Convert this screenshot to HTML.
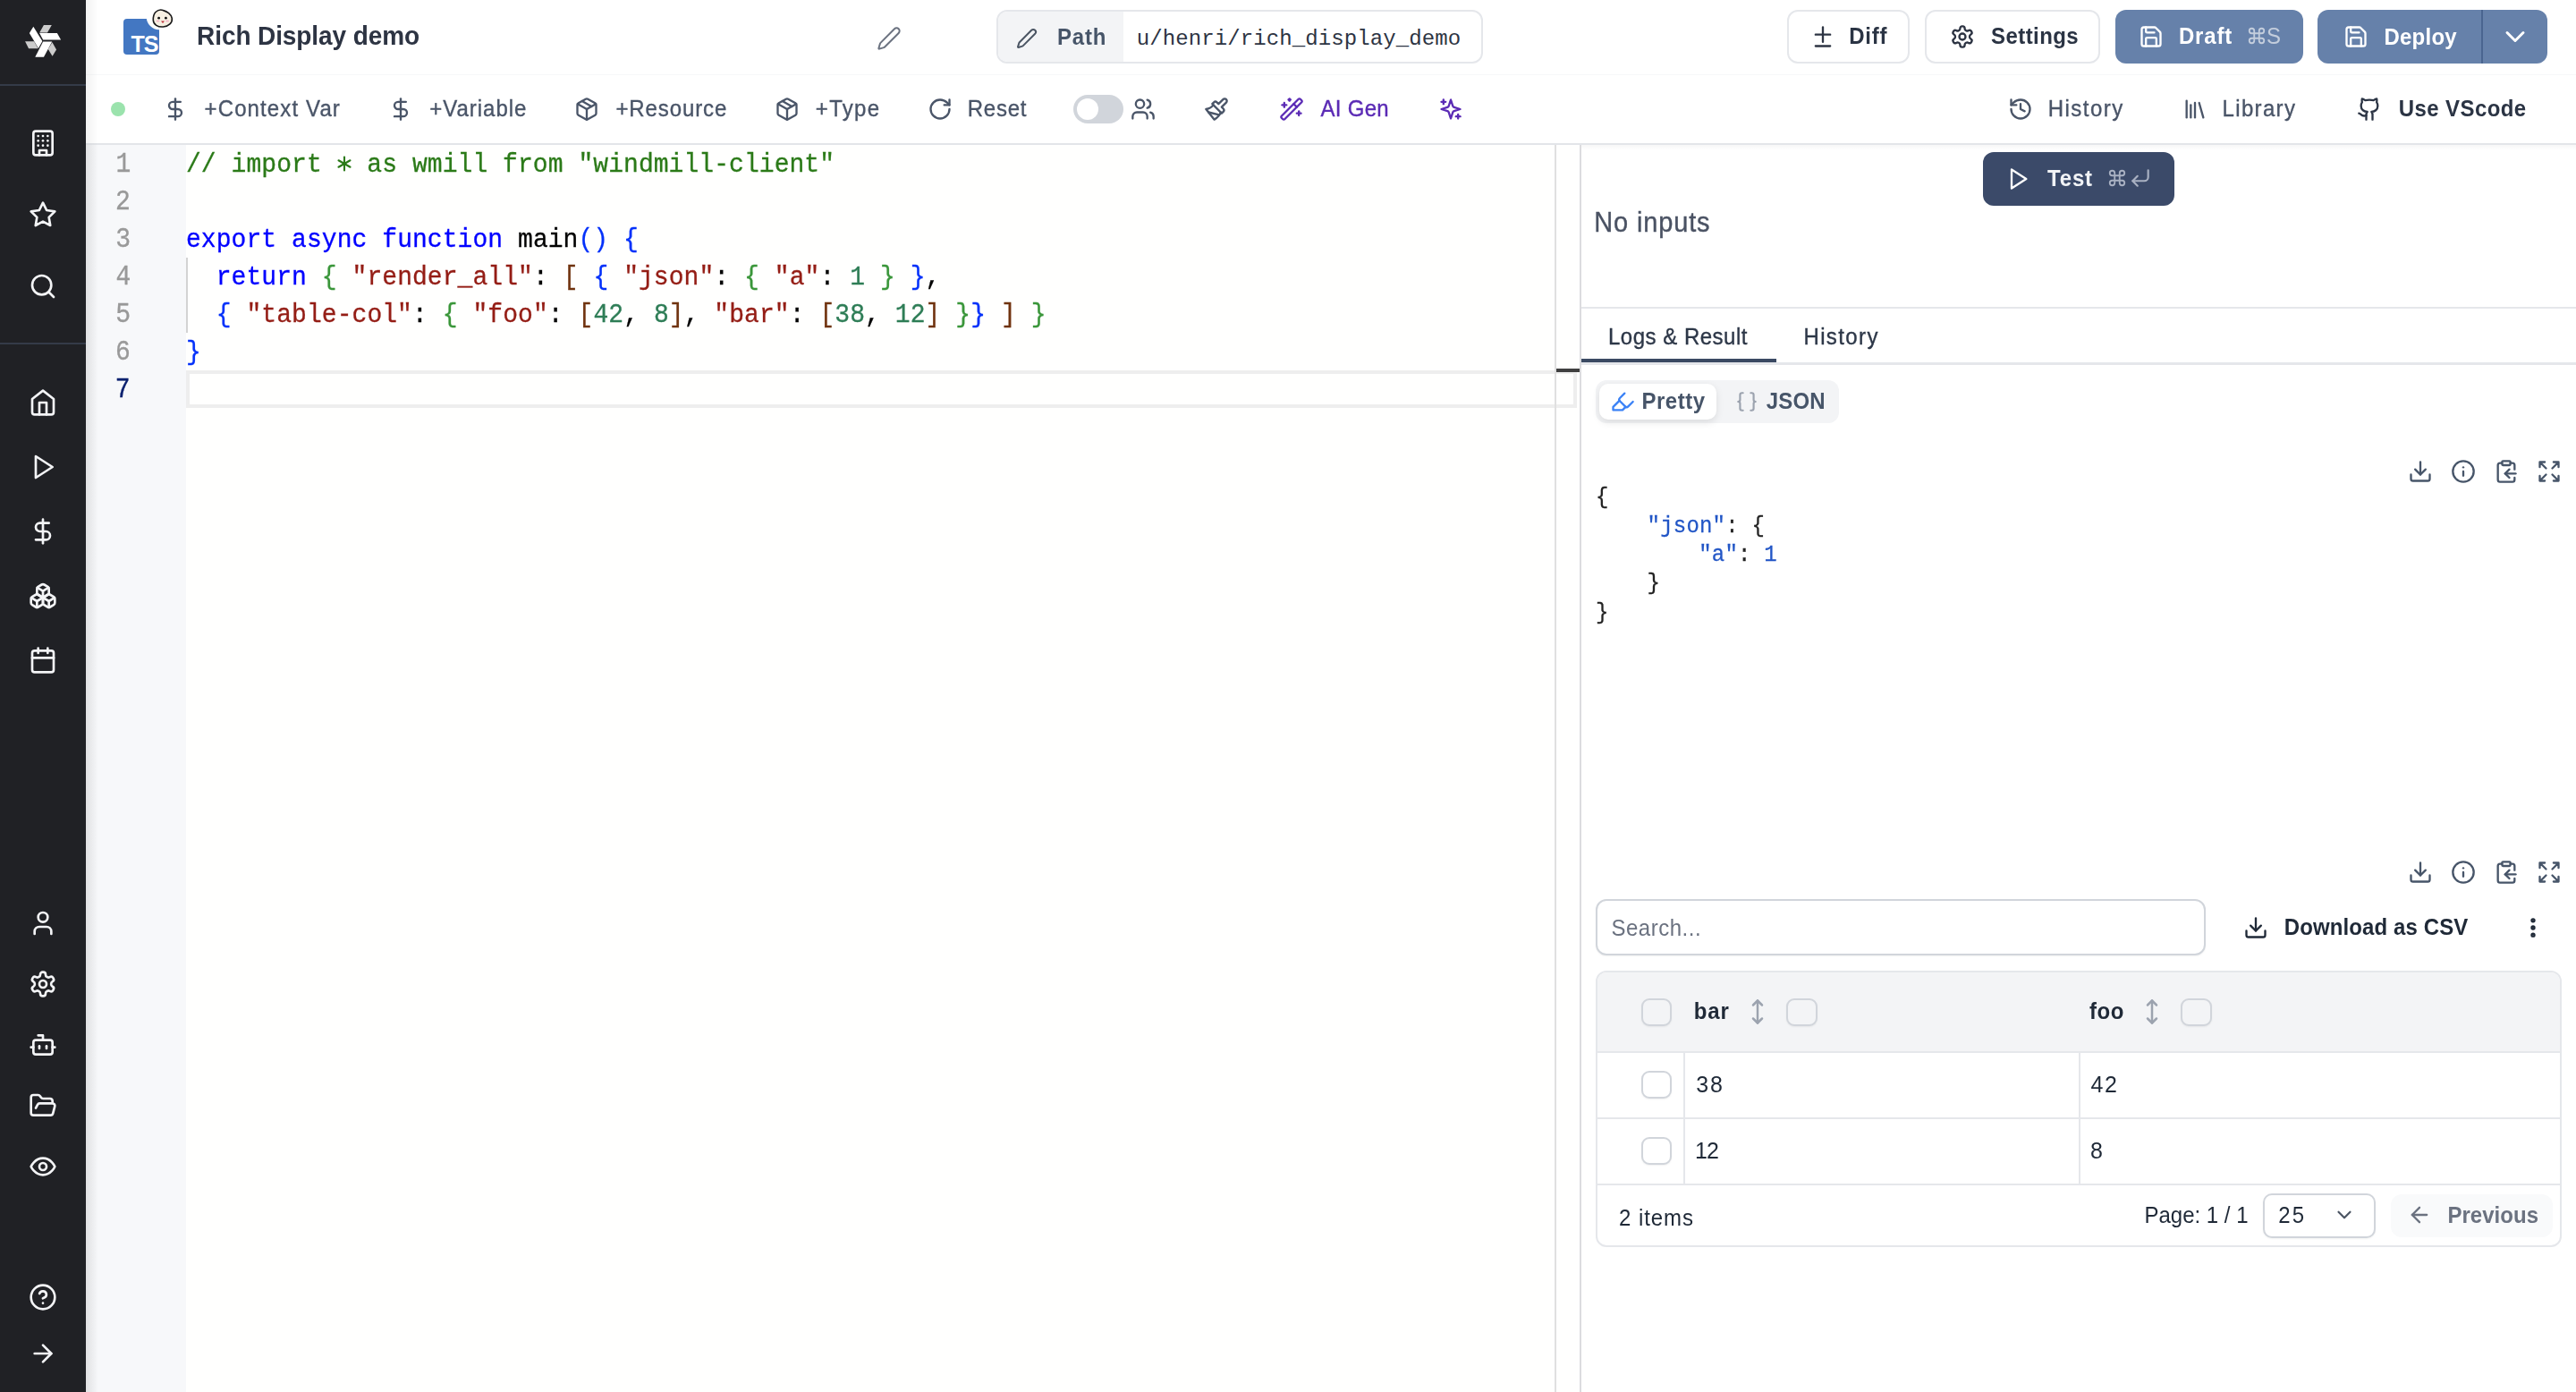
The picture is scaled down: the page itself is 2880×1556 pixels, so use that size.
<!DOCTYPE html><html><head><meta charset="utf-8"><style>*{margin:0;padding:0}
html,body{width:2880px;height:1556px;overflow:hidden;background:#fff;position:relative}
.a{position:absolute;display:block}
.t{position:absolute;white-space:pre}
.code{font:28px/42px "Liberation Mono",monospace;letter-spacing:0.06px;margin-top:2px;transform:scaleY(1.07);transform-origin:0 29.45px;-webkit-text-stroke:0.3px currentColor}
.json{font:24px/32px "Liberation Mono",monospace;letter-spacing:0.2px;margin-top:1px;transform:scaleY(1.07);transform-origin:0 24px;-webkit-text-stroke:0.25px currentColor}
</style></head><body><div class="a" style="left:96px;top:162px;width:1672px;height:1394px;background:#fffffe"></div>
<div class="a" style="left:96px;top:162px;width:112px;height:1394px;background:#f7f8fa"></div>
<div class="a" style="left:96px;top:162px;width:14px;height:1394px;background:linear-gradient(90deg,rgba(0,0,0,0.045),rgba(0,0,0,0))"></div>
<div class="t" style="left:129.57px;top:167.55px;font:normal 28px/34px 'Liberation Mono', monospace;color:#999999;letter-spacing:0.000px;-webkit-text-stroke:0.3px currentColor;transform:scaleY(1.1);transform-origin:0 24.45px;">1</div>
<div class="t" style="left:129.04px;top:209.55px;font:normal 28px/34px 'Liberation Mono', monospace;color:#999999;letter-spacing:0.000px;-webkit-text-stroke:0.3px currentColor;transform:scaleY(1.1);transform-origin:0 24.45px;">2</div>
<div class="t" style="left:129.25px;top:251.55px;font:normal 28px/34px 'Liberation Mono', monospace;color:#999999;letter-spacing:0.000px;-webkit-text-stroke:0.3px currentColor;transform:scaleY(1.1);transform-origin:0 24.45px;">3</div>
<div class="t" style="left:129.60px;top:293.55px;font:normal 28px/34px 'Liberation Mono', monospace;color:#999999;letter-spacing:0.000px;-webkit-text-stroke:0.3px currentColor;transform:scaleY(1.1);transform-origin:0 24.45px;">4</div>
<div class="t" style="left:129.25px;top:335.55px;font:normal 28px/34px 'Liberation Mono', monospace;color:#999999;letter-spacing:0.000px;-webkit-text-stroke:0.3px currentColor;transform:scaleY(1.1);transform-origin:0 24.45px;">5</div>
<div class="t" style="left:128.97px;top:377.55px;font:normal 28px/34px 'Liberation Mono', monospace;color:#999999;letter-spacing:0.000px;-webkit-text-stroke:0.3px currentColor;transform:scaleY(1.1);transform-origin:0 24.45px;">6</div>
<div class="t" style="left:128.83px;top:419.55px;font:normal 28px/34px 'Liberation Mono', monospace;color:#0b216f;letter-spacing:0.000px;-webkit-text-stroke:0.3px currentColor;transform:scaleY(1.1);transform-origin:0 24.45px;">7</div>
<div class="a" style="left:208px;top:414px;width:1555px;height:42px;box-sizing:border-box;border:4px solid #eeeeee"></div>
<div class="a" style="left:208px;top:288px;width:2px;height:84px;background:#d3d3d3"></div>
<div class="a" style="left:1738px;top:162px;width:1.5px;height:1394px;background:#e0e0e0"></div>
<div class="a" style="left:1740px;top:412px;width:26px;height:4px;background:#404040"></div>
<div class="a" style="left:1766px;top:162px;width:2px;height:1394px;background:#dcdcdf"></div>
<svg class="a" style="left:376px;top:174px" width="18" height="18" viewBox="0 0 18 18" stroke="#2b7a18" stroke-width="2.1" stroke-linecap="round"><line x1="9" y1="1.5" x2="9" y2="16.5"/><line x1="2.5" y1="5.25" x2="15.5" y2="12.75"/><line x1="2.5" y1="12.75" x2="15.5" y2="5.25"/></svg>
<div class="t code" style="left:208px;top:162px"><span style="color:#2b7a18">// import   as wmill from &quot;windmill-client&quot;</span></div>
<div class="t code" style="left:208px;top:246px"><span style="color:#0000ff">export</span><span style="color:#000000"> </span><span style="color:#0000ff">async</span><span style="color:#000000"> </span><span style="color:#0000ff">function</span><span style="color:#000000"> main</span><span style="color:#0431fa">()</span><span style="color:#000000"> </span><span style="color:#0431fa">{</span></div>
<div class="t code" style="left:208px;top:288px"><span style="color:#000000">  </span><span style="color:#0000ff">return</span><span style="color:#000000"> </span><span style="color:#3a963a">{</span><span style="color:#000000"> </span><span style="color:#941d15">&quot;render_all&quot;</span><span style="color:#000000">: </span><span style="color:#70330f">[</span><span style="color:#000000"> </span><span style="color:#0431fa">{</span><span style="color:#000000"> </span><span style="color:#941d15">&quot;json&quot;</span><span style="color:#000000">: </span><span style="color:#3a963a">{</span><span style="color:#000000"> </span><span style="color:#941d15">&quot;a&quot;</span><span style="color:#000000">: </span><span style="color:#2e7d56">1</span><span style="color:#000000"> </span><span style="color:#3a963a">}</span><span style="color:#000000"> </span><span style="color:#0431fa">}</span><span style="color:#000000">,</span></div>
<div class="t code" style="left:208px;top:330px"><span style="color:#000000">  </span><span style="color:#0431fa">{</span><span style="color:#000000"> </span><span style="color:#941d15">&quot;table-col&quot;</span><span style="color:#000000">: </span><span style="color:#3a963a">{</span><span style="color:#000000"> </span><span style="color:#941d15">&quot;foo&quot;</span><span style="color:#000000">: </span><span style="color:#70330f">[</span><span style="color:#2e7d56">42</span><span style="color:#000000">, </span><span style="color:#2e7d56">8</span><span style="color:#70330f">]</span><span style="color:#000000">, </span><span style="color:#941d15">&quot;bar&quot;</span><span style="color:#000000">: </span><span style="color:#70330f">[</span><span style="color:#2e7d56">38</span><span style="color:#000000">, </span><span style="color:#2e7d56">12</span><span style="color:#70330f">]</span><span style="color:#000000"> </span><span style="color:#3a963a">}</span><span style="color:#0431fa">}</span><span style="color:#000000"> </span><span style="color:#70330f">]</span><span style="color:#000000"> </span><span style="color:#3a963a">}</span></div>
<div class="t code" style="left:208px;top:372px"><span style="color:#0431fa">}</span></div>
<div class="a" style="left:1768px;top:162px;width:1112px;height:1394px;background:#ffffff"></div>
<div class="a" style="left:2217px;top:170px;width:214px;height:60px;background:#3b4a69;border-radius:12px"></div>
<svg class="a" style="left:2242.0px;top:186.0px;" width="28" height="28" viewBox="0 0 24 24" fill="none" stroke="#ffffff" stroke-width="2" stroke-linecap="round" stroke-linejoin="round"><polygon points="6 3 20 12 6 21 6 3"/></svg>
<div class="t" style="left:2289.06px;top:185.38px;font:bold 24px/29px 'Liberation Sans', sans-serif;color:#f1f3f6;letter-spacing:0.820px;transform:scaleY(1.05);transform-origin:0 22.82px;">Test</div>
<svg class="a" style="left:2356.4px;top:188.2px;" width="22" height="22" viewBox="0 0 24 24" fill="none" stroke="#a9b1c2" stroke-width="2" stroke-linecap="round" stroke-linejoin="round"><path d="M15 6v12a3 3 0 1 0 3-3H6a3 3 0 1 0 3 3V6a3 3 0 1 0-3 3h12a3 3 0 1 0-3-3"/></svg>
<svg class="a" style="left:2380.0px;top:186.0px;" width="26" height="26" viewBox="0 0 24 24" fill="none" stroke="#a9b1c2" stroke-width="2" stroke-linecap="round" stroke-linejoin="round"><polyline points="9 10 4 15 9 20"/><path d="M20 4v7a4 4 0 0 1-4 4H4"/></svg>
<div class="t" style="left:1782.21px;top:232.35px;font:normal 29px/35px 'Liberation Sans', sans-serif;color:#4a5263;letter-spacing:0.860px;-webkit-text-stroke:0.35px #4a5263;transform:scaleY(1.05);transform-origin:0 27.55px;">No inputs</div>
<div class="a" style="left:1768px;top:343px;width:1112px;height:2px;background:#e5e7eb"></div>
<div class="t" style="left:1797.92px;top:362.18px;font:normal 24px/29px 'Liberation Sans', sans-serif;color:#2d3748;letter-spacing:0.513px;-webkit-text-stroke:0.35px #2d3748;transform:scaleY(1.05);transform-origin:0 22.82px;">Logs &amp; Result</div>
<div class="t" style="left:2016.42px;top:362.18px;font:normal 24px/29px 'Liberation Sans', sans-serif;color:#2d3748;letter-spacing:1.390px;-webkit-text-stroke:0.35px #2d3748;transform:scaleY(1.05);transform-origin:0 22.82px;">History</div>
<div class="a" style="left:1768px;top:401px;width:218px;height:4px;background:#3b4a63"></div>
<div class="a" style="left:1768px;top:405px;width:1112px;height:3px;background:#e5e7eb"></div>
<div class="a" style="left:1784px;top:425px;width:272px;height:48px;background:#f3f4f6;border-radius:12px"></div>
<div class="a" style="left:1788px;top:429px;width:131px;height:40px;background:#ffffff;border-radius:10px;box-shadow:0 3px 8px rgba(0,0,0,0.10)"></div>
<svg class="a" style="left:1799.5px;top:435.0px;" width="28" height="28" viewBox="0 0 24 24" fill="none" stroke="#3b82f6" stroke-width="2" stroke-linecap="round" stroke-linejoin="round"><path d="m9 11-6 6v3h9l3-3"/><path d="m22 12-4.6 4.6a2 2 0 0 1-2.8 0l-5.2-5.2a2 2 0 0 1 0-2.8L14 4"/></svg>
<div class="t" style="left:1835.38px;top:434.38px;font:bold 24px/29px 'Liberation Sans', sans-serif;color:#475569;letter-spacing:0.552px;transform:scaleY(1.05);transform-origin:0 22.82px;">Pretty</div>
<svg class="a" style="left:1939.5px;top:436.0px;" width="26" height="26" viewBox="0 0 24 24" fill="none" stroke="#9ca3af" stroke-width="2" stroke-linecap="round" stroke-linejoin="round"><path d="M8 3H7a2 2 0 0 0-2 2v5a2 2 0 0 1-2 2 2 2 0 0 1 2 2v5c0 1.1.9 2 2 2h1"/><path d="M16 21h1a2 2 0 0 0 2-2v-5c0-1.1.9-2 2-2a2 2 0 0 1-2-2V5a2 2 0 0 0-2-2h-1"/></svg>
<div class="t" style="left:1974.84px;top:434.38px;font:bold 24px/29px 'Liberation Sans', sans-serif;color:#475569;letter-spacing:0.147px;transform:scaleY(1.05);transform-origin:0 22.82px;">JSON</div>
<svg class="a" style="left:2692.0px;top:513.0px;" width="28" height="28" viewBox="0 0 24 24" fill="none" stroke="#475569" stroke-width="2" stroke-linecap="round" stroke-linejoin="round"><path d="M21 15v4a2 2 0 0 1-2 2H5a2 2 0 0 1-2-2v-4"/><polyline points="7 10 12 15 17 10"/><line x1="12" x2="12" y1="15" y2="3"/></svg>
<svg class="a" style="left:2740.0px;top:513.0px;" width="28" height="28" viewBox="0 0 24 24" fill="none" stroke="#475569" stroke-width="2" stroke-linecap="round" stroke-linejoin="round"><circle cx="12" cy="12" r="10"/><path d="M12 16v-4"/><path d="M12 8h.01"/></svg>
<svg class="a" style="left:2787.5px;top:513.0px;" width="28" height="28" viewBox="0 0 24 24" fill="none" stroke="#475569" stroke-width="2" stroke-linecap="round" stroke-linejoin="round"><rect width="8" height="4" x="8" y="2" rx="1" ry="1"/><path d="M8 4H6a2 2 0 0 0-2 2v14a2 2 0 0 0 2 2h12a2 2 0 0 0 2-2v-2"/><path d="M16 4h2a2 2 0 0 1 2 2v4"/><path d="M21 14H11"/><path d="m15 10-4 4 4 4"/></svg>
<svg class="a" style="left:2836.0px;top:513.0px;" width="28" height="28" viewBox="0 0 24 24" fill="none" stroke="#475569" stroke-width="2" stroke-linecap="round" stroke-linejoin="round"><path d="m21 21-6-6m6 6v-4.8m0 4.8h-4.8"/><path d="M3 16.2V21m0 0h4.8M3 21l6-6"/><path d="M21 7.8V3m0 0h-4.8M21 3l-6 6"/><path d="M3 7.8V3m0 0h4.8M3 3l6 6"/></svg>
<svg class="a" style="left:2692.0px;top:961.0px;" width="28" height="28" viewBox="0 0 24 24" fill="none" stroke="#475569" stroke-width="2" stroke-linecap="round" stroke-linejoin="round"><path d="M21 15v4a2 2 0 0 1-2 2H5a2 2 0 0 1-2-2v-4"/><polyline points="7 10 12 15 17 10"/><line x1="12" x2="12" y1="15" y2="3"/></svg>
<svg class="a" style="left:2740.0px;top:961.0px;" width="28" height="28" viewBox="0 0 24 24" fill="none" stroke="#475569" stroke-width="2" stroke-linecap="round" stroke-linejoin="round"><circle cx="12" cy="12" r="10"/><path d="M12 16v-4"/><path d="M12 8h.01"/></svg>
<svg class="a" style="left:2787.5px;top:961.0px;" width="28" height="28" viewBox="0 0 24 24" fill="none" stroke="#475569" stroke-width="2" stroke-linecap="round" stroke-linejoin="round"><rect width="8" height="4" x="8" y="2" rx="1" ry="1"/><path d="M8 4H6a2 2 0 0 0-2 2v14a2 2 0 0 0 2 2h12a2 2 0 0 0 2-2v-2"/><path d="M16 4h2a2 2 0 0 1 2 2v4"/><path d="M21 14H11"/><path d="m15 10-4 4 4 4"/></svg>
<svg class="a" style="left:2836.0px;top:961.0px;" width="28" height="28" viewBox="0 0 24 24" fill="none" stroke="#475569" stroke-width="2" stroke-linecap="round" stroke-linejoin="round"><path d="m21 21-6-6m6 6v-4.8m0 4.8h-4.8"/><path d="M3 16.2V21m0 0h4.8M3 21l6-6"/><path d="M21 7.8V3m0 0h-4.8M21 3l-6 6"/><path d="M3 7.8V3m0 0h4.8M3 3l6 6"/></svg>
<div class="t json" style="left:1784.0px;top:539.5px"><span style="color:#222222">{</span></div>
<div class="t json" style="left:1841.6px;top:571.8px"><span style="color:#2256c6">&quot;json&quot;</span><span style="color:#222222">: {</span></div>
<div class="t json" style="left:1899.2px;top:604.1px"><span style="color:#2256c6">&quot;a&quot;</span><span style="color:#222222">: </span><span style="color:#2256c6">1</span></div>
<div class="t json" style="left:1841.6px;top:636.4px"><span style="color:#222222">}</span></div>
<div class="t json" style="left:1784.0px;top:668.7px"><span style="color:#222222">}</span></div>
<div class="a" style="left:1784px;top:1005px;width:682px;height:63px;box-sizing:border-box;border:2px solid #d1d5db;border-radius:12px;background:#fff;box-shadow:0 1px 2px rgba(0,0,0,0.05)"></div>
<div class="t" style="left:1801.42px;top:1022.58px;font:normal 24px/29px 'Liberation Sans', sans-serif;color:#6b7280;letter-spacing:0.522px;transform:scaleY(1.05);transform-origin:0 22.82px;">Search...</div>
<svg class="a" style="left:2508.0px;top:1023.0px;" width="28" height="28" viewBox="0 0 24 24" fill="none" stroke="#1f2937" stroke-width="2" stroke-linecap="round" stroke-linejoin="round"><path d="M21 15v4a2 2 0 0 1-2 2H5a2 2 0 0 1-2-2v-4"/><polyline points="7 10 12 15 17 10"/><line x1="12" x2="12" y1="15" y2="3"/></svg>
<div class="t" style="left:2553.78px;top:1022.38px;font:bold 24px/29px 'Liberation Sans', sans-serif;color:#1f2937;letter-spacing:0.110px;transform:scaleY(1.05);transform-origin:0 22.82px;">Download as CSV</div>
<svg class="a" style="left:2817.5px;top:1023.0px;" width="28" height="28" viewBox="0 0 24 24" fill="none" stroke="#1f2937" stroke-width="2.6" stroke-linecap="round" stroke-linejoin="round"><circle cx="12" cy="12" r="1"/><circle cx="12" cy="5" r="1"/><circle cx="12" cy="19" r="1"/></svg>
<div class="a" style="left:1784px;top:1085px;width:1080px;height:309px;box-sizing:border-box;border:2px solid #e5e7eb;border-radius:12px;background:#fff;overflow:hidden"></div>
<div class="a" style="left:1786px;top:1087px;width:1076px;height:88px;background:#f3f4f6;border-radius:10px 10px 0 0"></div>
<div class="a" style="left:1786px;top:1175px;width:1076px;height:2px;background:#e5e7eb"></div>
<div class="a" style="left:1786px;top:1249px;width:1076px;height:2px;background:#e5e7eb"></div>
<div class="a" style="left:1786px;top:1323px;width:1076px;height:2px;background:#e5e7eb"></div>
<div class="a" style="left:1882px;top:1177px;width:2px;height:146px;background:#e5e7eb"></div>
<div class="a" style="left:2324px;top:1177px;width:2px;height:146px;background:#e5e7eb"></div>
<div class="a" style="left:1835px;top:1116px;width:34px;height:31px;box-sizing:border-box;border:2px solid #d1d5db;border-radius:9px;background:#f3f4f6;box-shadow:0 1px 2px rgba(0,0,0,0.06)"></div>
<div class="a" style="left:1997px;top:1116px;width:35px;height:31px;box-sizing:border-box;border:2px solid #d1d5db;border-radius:9px;background:#f3f4f6;box-shadow:0 1px 2px rgba(0,0,0,0.06)"></div>
<div class="a" style="left:2438px;top:1116px;width:35px;height:31px;box-sizing:border-box;border:2px solid #d1d5db;border-radius:9px;background:#f3f4f6;box-shadow:0 1px 2px rgba(0,0,0,0.06)"></div>
<div class="a" style="left:1835px;top:1197px;width:34px;height:31px;box-sizing:border-box;border:2px solid #d1d5db;border-radius:9px;background:#fff;box-shadow:0 1px 2px rgba(0,0,0,0.06)"></div>
<div class="a" style="left:1835px;top:1271px;width:34px;height:31px;box-sizing:border-box;border:2px solid #d1d5db;border-radius:9px;background:#fff;box-shadow:0 1px 2px rgba(0,0,0,0.06)"></div>
<div class="t" style="left:1893.84px;top:1116.18px;font:bold 24px/29px 'Liberation Sans', sans-serif;color:#1f2937;letter-spacing:0.870px;transform:scaleY(1.05);transform-origin:0 22.82px;">bar</div>
<div class="t" style="left:2335.98px;top:1116.18px;font:bold 24px/29px 'Liberation Sans', sans-serif;color:#1f2937;letter-spacing:0.600px;transform:scaleY(1.05);transform-origin:0 22.82px;">foo</div>
<svg class="a" style="left:1950.0px;top:1116.0px;" width="30" height="30" viewBox="0 0 24 24" fill="none" stroke="#9ca3af" stroke-width="2" stroke-linecap="round" stroke-linejoin="round"><path d="M12 2v20"/><path d="m8 18 4 4 4-4"/><path d="m8 6 4-4 4 4"/></svg>
<svg class="a" style="left:2390.5px;top:1116.0px;" width="30" height="30" viewBox="0 0 24 24" fill="none" stroke="#9ca3af" stroke-width="2" stroke-linecap="round" stroke-linejoin="round"><path d="M12 2v20"/><path d="m8 18 4 4 4-4"/><path d="m8 6 4-4 4 4"/></svg>
<div class="t" style="left:1896.26px;top:1197.33px;font:normal 25px/30px 'Liberation Sans', sans-serif;color:#1f2937;letter-spacing:1.850px;transform:scaleY(1.05);transform-origin:0 23.67px;">38</div>
<div class="t" style="left:2337.44px;top:1197.33px;font:normal 25px/30px 'Liberation Sans', sans-serif;color:#1f2937;letter-spacing:1.662px;transform:scaleY(1.05);transform-origin:0 23.67px;">42</div>
<div class="t" style="left:1895.12px;top:1271.33px;font:normal 25px/30px 'Liberation Sans', sans-serif;color:#1f2937;letter-spacing:-1.125px;transform:scaleY(1.05);transform-origin:0 23.67px;">12</div>
<div class="t" style="left:2336.94px;top:1271.33px;font:normal 25px/30px 'Liberation Sans', sans-serif;color:#1f2937;letter-spacing:0.000px;transform:scaleY(1.05);transform-origin:0 23.67px;">8</div>
<div class="t" style="left:1810.10px;top:1346.98px;font:normal 24px/29px 'Liberation Sans', sans-serif;color:#1f2937;letter-spacing:0.917px;transform:scaleY(1.05);transform-origin:0 22.82px;">2 items</div>
<div class="t" style="left:2397.42px;top:1344.38px;font:normal 24px/29px 'Liberation Sans', sans-serif;color:#1f2937;letter-spacing:0.008px;transform:scaleY(1.05);transform-origin:0 22.82px;">Page: 1 / 1</div>
<div class="a" style="left:2530px;top:1334px;width:126px;height:50px;box-sizing:border-box;border:2px solid #d1d5db;border-radius:10px;background:#fff;box-shadow:0 1px 2px rgba(0,0,0,0.05)"></div>
<div class="t" style="left:2547.30px;top:1344.38px;font:normal 24px/29px 'Liberation Sans', sans-serif;color:#1f2937;letter-spacing:2.020px;transform:scaleY(1.05);transform-origin:0 22.82px;">25</div>
<svg class="a" style="left:2608.0px;top:1345.0px;" width="26" height="26" viewBox="0 0 24 24" fill="none" stroke="#4b5563" stroke-width="2" stroke-linecap="round" stroke-linejoin="round"><path d="m6 9 6 6 6-6"/></svg>
<div class="a" style="left:2673px;top:1335px;width:181px;height:48px;background:#f9fafb;border-radius:12px"></div>
<svg class="a" style="left:2691.0px;top:1344.0px;" width="28" height="28" viewBox="0 0 24 24" fill="none" stroke="#6b7280" stroke-width="2" stroke-linecap="round" stroke-linejoin="round"><path d="m12 19-7-7 7-7"/><path d="M19 12H5"/></svg>
<div class="t" style="left:2736.38px;top:1344.38px;font:bold 24px/29px 'Liberation Sans', sans-serif;color:#6b7280;letter-spacing:0.034px;transform:scaleY(1.05);transform-origin:0 22.82px;">Previous</div>
<div class="a" style="left:96px;top:0px;width:2784px;height:162px;background:#ffffff"></div>
<div class="a" style="left:96px;top:83px;width:2784px;height:1px;background:#f7f8f9"></div>
<div class="a" style="left:1768px;top:162px;width:1112px;height:6px;background:linear-gradient(180deg,rgba(0,0,0,0.03),rgba(0,0,0,0))"></div>
<div class="a" style="left:96px;top:160px;width:2784px;height:2px;background:#e3e5e9"></div>
<div class="a" style="left:96px;top:0px;width:14px;height:1556px;background:linear-gradient(90deg,rgba(0,0,0,0.05),rgba(0,0,0,0))"></div>
<svg class="a" style="left:138px;top:8px" width="60" height="54" viewBox="0 0 60 54"><defs><mask id="m"><rect x="0" y="0" width="60" height="54" fill="#fff"/><circle cx="40" cy="11" r="14.25" fill="#000"/></mask></defs><rect x="0" y="13" width="40" height="40" rx="4" fill="#4377c2" mask="url(#m)"/><text x="8.5" y="49.8" font-family="Liberation Sans" font-weight="bold" font-size="25" fill="#fff" letter-spacing="-1">TS</text><path d="M36 5.5 C38.5 3.2 42 2.6 44.5 3.6 C48.5 4.6 53.5 8 54.3 12.5 C55 17.5 50.5 21.5 44.5 22 C38.5 22.5 33.5 19.5 33.3 14.5 C33.2 11 34 7.5 36 5.5 Z" fill="#f7f0e2" stroke="#1a1a1a" stroke-width="1.6"/><circle cx="39.6" cy="12.2" r="1.4" fill="#111"/><circle cx="47.4" cy="12.2" r="1.4" fill="#111"/><ellipse cx="38.5" cy="15.5" rx="2" ry="1" fill="#f5b8c8"/><ellipse cx="49" cy="15.5" rx="2" ry="1" fill="#f5b8c8"/><path d="M42 15.5 L46 15.5 L44 18 Z" fill="#c0303a"/></svg>
<div class="t" style="left:220.11px;top:24.29px;font:bold 28px/34px 'Liberation Sans', sans-serif;color:#2d3443;letter-spacing:-0.099px;transform:scaleY(1.08);transform-origin:0 26.71px;">Rich Display demo</div>
<svg class="a" style="left:980.0px;top:29.0px;" width="28" height="28" viewBox="0 0 24 24" fill="none" stroke="#6b7280" stroke-width="1.7" stroke-linecap="round" stroke-linejoin="round"><path d="M21.174 6.812a1 1 0 0 0-3.986-3.987L3.842 16.174a2 2 0 0 0-.5.83l-1.321 4.352a.5.5 0 0 0 .623.622l4.353-1.32a2 2 0 0 0 .83-.497z"/></svg>
<div class="a" style="left:1114px;top:11px;width:544px;height:60px;box-sizing:border-box;border:2px solid #e5e7eb;border-radius:12px;background:#fff;overflow:hidden"></div>
<div class="a" style="left:1116px;top:13px;width:140px;height:56px;background:#f3f4f6;border-radius:10px 0 0 10px"></div>
<svg class="a" style="left:1135.5px;top:31.0px;" width="24" height="24" viewBox="0 0 24 24" fill="none" stroke="#4b5563" stroke-width="2" stroke-linecap="round" stroke-linejoin="round"><path d="M21.174 6.812a1 1 0 0 0-3.986-3.987L3.842 16.174a2 2 0 0 0-.5.83l-1.321 4.352a.5.5 0 0 0 .623.622l4.353-1.32a2 2 0 0 0 .83-.497z"/></svg>
<div class="t" style="left:1181.98px;top:26.88px;font:bold 24px/29px 'Liberation Sans', sans-serif;color:#475569;letter-spacing:0.833px;transform:scaleY(1.05);transform-origin:0 22.82px;">Path</div>
<div class="t" style="left:1270.84px;top:28.81px;font:normal 24px/29px 'Liberation Mono', monospace;color:#2d3443;letter-spacing:0.098px;">u/henri/rich_display_demo</div>
<div class="a" style="left:1998px;top:11px;width:137px;height:60px;box-sizing:border-box;border:2px solid #e5e7eb;border-radius:12px;background:#fff"></div>
<svg class="a" style="left:2024.0px;top:27.0px;" width="28" height="28" viewBox="0 0 24 24" fill="none" stroke="#2d3443" stroke-width="2" stroke-linecap="round" stroke-linejoin="round"><path d="M12 3v14"/><path d="M5 10h14"/><path d="M5 21h14"/></svg>
<div class="t" style="left:2067.28px;top:26.48px;font:bold 24px/29px 'Liberation Sans', sans-serif;color:#2b3444;letter-spacing:0.767px;transform:scaleY(1.05);transform-origin:0 22.82px;">Diff</div>
<div class="a" style="left:2152px;top:11px;width:196px;height:60px;box-sizing:border-box;border:2px solid #e5e7eb;border-radius:12px;background:#fff"></div>
<svg class="a" style="left:2180.0px;top:27.0px;" width="28" height="28" viewBox="0 0 24 24" fill="none" stroke="#2d3443" stroke-width="2" stroke-linecap="round" stroke-linejoin="round"><path d="M12.22 2h-.44a2 2 0 0 0-2 2v.18a2 2 0 0 1-1 1.730l-.43.25a2 2 0 0 1-2 0l-.15-.08a2 2 0 0 0-2.73.73l-.22.38a2 2 0 0 0 .73 2.73l.15.1a2 2 0 0 1 1 1.72v.51a2 2 0 0 1-1 1.74l-.15.09a2 2 0 0 0-.73 2.73l.22.38a2 2 0 0 0 2.73.73l.15-.08a2 2 0 0 1 2 0l.43.25a2 2 0 0 1 1 1.73V20a2 2 0 0 0 2 2h.44a2 2 0 0 0 2-2v-.18a2 2 0 0 1 1-1.73l.43-.25a2 2 0 0 1 2 0l.15.08a2 2 0 0 0 2.73-.73l.22-.39a2 2 0 0 0-.73-2.730l-.15-.08a2 2 0 0 1-1-1.74v-.5a2 2 0 0 1 1-1.74l.15-.09a2 2 0 0 0 .73-2.73l-.22-.38a2 2 0 0 0-2.73-.73l-.15.08a2 2 0 0 1-2 0l-.43-.25a2 2 0 0 1-1-1.73V4a2 2 0 0 0-2-2z"/><circle cx="12" cy="12" r="3"/></svg>
<div class="t" style="left:2226.08px;top:26.48px;font:bold 24px/29px 'Liberation Sans', sans-serif;color:#2b3444;letter-spacing:0.414px;transform:scaleY(1.05);transform-origin:0 22.82px;">Settings</div>
<div class="a" style="left:2365px;top:11px;width:210px;height:60px;background:#6681aa;border-radius:12px"></div>
<svg class="a" style="left:2390.5px;top:27.0px;" width="28" height="28" viewBox="0 0 24 24" fill="none" stroke="#ffffff" stroke-width="2" stroke-linecap="round" stroke-linejoin="round"><path d="M15.2 3a2 2 0 0 1 1.4.6l3.8 3.8a2 2 0 0 1 .6 1.4V19a2 2 0 0 1-2 2H5a2 2 0 0 1-2-2V5a2 2 0 0 1 2-2z"/><path d="M17 21v-7a1 1 0 0 0-1-1H8a1 1 0 0 0-1 1v7"/><path d="M7 3v4a1 1 0 0 0 1 1h7"/></svg>
<div class="t" style="left:2435.88px;top:26.48px;font:bold 24px/29px 'Liberation Sans', sans-serif;color:#ffffff;letter-spacing:0.860px;transform:scaleY(1.05);transform-origin:0 22.82px;">Draft</div>
<svg class="a" style="left:2512.0px;top:29.299999999999997px;" width="22" height="22" viewBox="0 0 24 24" fill="none" stroke="#c3cddc" stroke-width="2" stroke-linecap="round" stroke-linejoin="round"><path d="M15 6v12a3 3 0 1 0 3-3H6a3 3 0 1 0 3 3V6a3 3 0 1 0-3 3h12a3 3 0 1 0-3-3"/></svg>
<div class="t" style="left:2533.92px;top:26.48px;font:normal 24px/29px 'Liberation Sans', sans-serif;color:#c3cddc;letter-spacing:0.000px;transform:scaleY(1.05);transform-origin:0 22.82px;">S</div>
<div class="a" style="left:2591px;top:11px;width:257px;height:60px;background:#6681aa;border-radius:12px"></div>
<div class="a" style="left:2774px;top:11px;width:2px;height:60px;background:#4a6590"></div>
<svg class="a" style="left:2620.0px;top:27.0px;" width="28" height="28" viewBox="0 0 24 24" fill="none" stroke="#ffffff" stroke-width="2" stroke-linecap="round" stroke-linejoin="round"><path d="M15.2 3a2 2 0 0 1 1.4.6l3.8 3.8a2 2 0 0 1 .6 1.4V19a2 2 0 0 1-2 2H5a2 2 0 0 1-2-2V5a2 2 0 0 1 2-2z"/><path d="M17 21v-7a1 1 0 0 0-1-1H8a1 1 0 0 0-1 1v7"/><path d="M7 3v4a1 1 0 0 0 1 1h7"/></svg>
<div class="t" style="left:2665.38px;top:26.68px;font:bold 24px/29px 'Liberation Sans', sans-serif;color:#ffffff;letter-spacing:0.252px;transform:scaleY(1.05);transform-origin:0 22.82px;">Deploy</div>
<svg class="a" style="left:2793.7px;top:23.0px;" width="36" height="36" viewBox="0 0 24 24" fill="none" stroke="#ffffff" stroke-width="2" stroke-linecap="round" stroke-linejoin="round"><path d="m6 9 6 6 6-6"/></svg>
<div class="a" style="left:124px;top:114px;width:16px;height:16px;background:#9be3ad;border-radius:50%"></div>
<svg class="a" style="left:182.0px;top:108.0px;" width="28" height="28" viewBox="0 0 24 24" fill="none" stroke="#4a5568" stroke-width="2" stroke-linecap="round" stroke-linejoin="round"><line x1="12" x2="12" y1="2" y2="22"/><path d="M17 5H9.5a3.5 3.5 0 0 0 0 7h5a3.5 3.5 0 0 1 0 7H6"/></svg>
<div class="t" style="left:228.56px;top:107.48px;font:normal 24px/29px 'Liberation Sans', sans-serif;color:#4a5568;letter-spacing:1.122px;-webkit-text-stroke:0.35px #4a5568;transform:scaleY(1.05);transform-origin:0 22.82px;">+Context Var</div>
<svg class="a" style="left:434.0px;top:108.0px;" width="28" height="28" viewBox="0 0 24 24" fill="none" stroke="#4a5568" stroke-width="2" stroke-linecap="round" stroke-linejoin="round"><line x1="12" x2="12" y1="2" y2="22"/><path d="M17 5H9.5a3.5 3.5 0 0 0 0 7h5a3.5 3.5 0 0 1 0 7H6"/></svg>
<div class="t" style="left:480.36px;top:107.48px;font:normal 24px/29px 'Liberation Sans', sans-serif;color:#4a5568;letter-spacing:0.963px;-webkit-text-stroke:0.35px #4a5568;transform:scaleY(1.05);transform-origin:0 22.82px;">+Variable</div>
<svg class="a" style="left:642.0px;top:108.0px;" width="28" height="28" viewBox="0 0 24 24" fill="none" stroke="#4a5568" stroke-width="2" stroke-linecap="round" stroke-linejoin="round"><path d="m7.5 4.27 9 5.15"/><path d="M21 8a2 2 0 0 0-1-1.73l-7-4a2 2 0 0 0-2 0l-7 4A2 2 0 0 0 3 8v8a2 2 0 0 0 1 1.73l7 4a2 2 0 0 0 2 0l7-4A2 2 0 0 0 21 16Z"/><path d="m3.3 7 8.7 5 8.7-5"/><path d="M12 22V12"/></svg>
<div class="t" style="left:688.46px;top:107.48px;font:normal 24px/29px 'Liberation Sans', sans-serif;color:#4a5568;letter-spacing:0.883px;-webkit-text-stroke:0.35px #4a5568;transform:scaleY(1.05);transform-origin:0 22.82px;">+Resource</div>
<svg class="a" style="left:866.0px;top:108.0px;" width="28" height="28" viewBox="0 0 24 24" fill="none" stroke="#4a5568" stroke-width="2" stroke-linecap="round" stroke-linejoin="round"><path d="m7.5 4.27 9 5.15"/><path d="M21 8a2 2 0 0 0-1-1.73l-7-4a2 2 0 0 0-2 0l-7 4A2 2 0 0 0 3 8v8a2 2 0 0 0 1 1.73l7 4a2 2 0 0 0 2 0l7-4A2 2 0 0 0 21 16Z"/><path d="m3.3 7 8.7 5 8.7-5"/><path d="M12 22V12"/></svg>
<div class="t" style="left:911.86px;top:107.48px;font:normal 24px/29px 'Liberation Sans', sans-serif;color:#4a5568;letter-spacing:1.290px;-webkit-text-stroke:0.35px #4a5568;transform:scaleY(1.05);transform-origin:0 22.82px;">+Type</div>
<svg class="a" style="left:1037.0px;top:108.0px;" width="28" height="28" viewBox="0 0 24 24" fill="none" stroke="#4a5568" stroke-width="2" stroke-linecap="round" stroke-linejoin="round"><path d="M21 12a9 9 0 1 1-9-9c2.52 0 4.93 1 6.74 2.74L21 8"/><path d="M21 3v5h-5"/></svg>
<div class="t" style="left:1081.72px;top:107.48px;font:normal 24px/29px 'Liberation Sans', sans-serif;color:#4a5568;letter-spacing:0.765px;-webkit-text-stroke:0.35px #4a5568;transform:scaleY(1.05);transform-origin:0 22.82px;">Reset</div>
<div class="a" style="left:1200px;top:106px;width:56px;height:32px;background:#d1d5db;border-radius:16px"></div>
<div class="a" style="left:1204px;top:110px;width:24px;height:24px;background:#ffffff;border-radius:50%"></div>
<svg class="a" style="left:1264.0px;top:108.0px;" width="28" height="28" viewBox="0 0 24 24" fill="none" stroke="#4a5568" stroke-width="2" stroke-linecap="round" stroke-linejoin="round"><path d="M16 21v-2a4 4 0 0 0-4-4H6a4 4 0 0 0-4 4v2"/><circle cx="9" cy="7" r="4"/><path d="M22 21v-2a4 4 0 0 0-3-3.87"/><path d="M16 3.13a4 4 0 0 1 0 7.75"/></svg>
<svg class="a" style="left:1346.0px;top:108.0px;" width="28" height="28" viewBox="0 0 24 24" fill="none" stroke="#4a5568" stroke-width="2" stroke-linecap="round" stroke-linejoin="round"><path d="M18.37 2.63 14 7l-1.59-1.59a2 2 0 0 0-2.82 0L8 7l9 9 1.59-1.59a2 2 0 0 0 0-2.82L17 10l4.37-4.37a2.12 2.12 0 1 0-3-3Z"/><path d="M9 8c-2 3-4 3.5-7 4l8 10c2-1 6-5 6-7"/><path d="M14.5 17.5 4.5 15"/></svg>
<svg class="a" style="left:1430.0px;top:108.0px;" width="28" height="28" viewBox="0 0 24 24" fill="none" stroke="#5b2bb5" stroke-width="2" stroke-linecap="round" stroke-linejoin="round"><path d="m21.64 3.64-1.28-1.28a1.21 1.21 0 0 0-1.72 0L2.36 18.64a1.21 1.21 0 0 0 0 1.72l1.28 1.28a1.2 1.2 0 0 0 1.72 0L21.64 5.36a1.2 1.2 0 0 0 0-1.72"/><path d="m14 7 3 3"/><path d="M5 6v4"/><path d="M19 14v4"/><path d="M10 2v2"/><path d="M7 8H3"/><path d="M21 16h-4"/><path d="M11 3H9"/></svg>
<div class="t" style="left:1476.54px;top:107.48px;font:normal 24px/29px 'Liberation Sans', sans-serif;color:#5b2bb5;letter-spacing:0.292px;-webkit-text-stroke:0.35px #5b2bb5;transform:scaleY(1.05);transform-origin:0 22.82px;">AI Gen</div>
<svg class="a" style="left:1608.0px;top:108.0px;" width="28" height="28" viewBox="0 0 24 24" fill="none" stroke="#5b2bb5" stroke-width="2" stroke-linecap="round" stroke-linejoin="round"><path d="m12 3-1.912 5.813a2 2 0 0 1-1.275 1.275L3 12l5.813 1.912a2 2 0 0 1 1.275 1.275L12 21l1.912-5.813a2 2 0 0 1 1.275-1.275L21 12l-5.813-1.912a2 2 0 0 1-1.275-1.275L12 3Z"/><path d="M5 3v4"/><path d="M19 17v4"/><path d="M3 5h4"/><path d="M17 19h4"/></svg>
<svg class="a" style="left:2245.0px;top:108.0px;" width="28" height="28" viewBox="0 0 24 24" fill="none" stroke="#4a5568" stroke-width="2" stroke-linecap="round" stroke-linejoin="round"><path d="M3 12a9 9 0 1 0 9-9 9.75 9.75 0 0 0-6.74 2.74L3 8"/><path d="M3 3v5h5"/><path d="M12 7v5l4 2"/></svg>
<div class="t" style="left:2289.72px;top:107.48px;font:normal 24px/29px 'Liberation Sans', sans-serif;color:#4a5568;letter-spacing:1.473px;-webkit-text-stroke:0.35px #4a5568;transform:scaleY(1.05);transform-origin:0 22.82px;">History</div>
<svg class="a" style="left:2440.0px;top:108.0px;" width="28" height="28" viewBox="0 0 24 24" fill="none" stroke="#4a5568" stroke-width="2" stroke-linecap="round" stroke-linejoin="round"><path d="m16 6 4 14"/><path d="M12 6v14"/><path d="M8 8v12"/><path d="M4 4v16"/></svg>
<div class="t" style="left:2484.52px;top:107.48px;font:normal 24px/29px 'Liberation Sans', sans-serif;color:#4a5568;letter-spacing:1.343px;-webkit-text-stroke:0.35px #4a5568;transform:scaleY(1.05);transform-origin:0 22.82px;">Library</div>
<svg class="a" style="left:2635.0px;top:108.0px;" width="28" height="28" viewBox="0 0 24 24" fill="none" stroke="#2b3444" stroke-width="2" stroke-linecap="round" stroke-linejoin="round"><path d="M15 22v-4a4.8 4.8 0 0 0-1-3.5c3 0 6-2 6-5.5.08-1.25-.27-2.48-1-3.5.28-1.15.28-2.35 0-3.5 0 0-1 0-3 1.5-2.64-.5-5.36-.5-8 0C6 2 5 2 5 2c-.3 1.15-.3 2.35 0 3.5A5.403 5.403 0 0 0 4 9c0 3.5 3 5.5 6 5.5-.39.49-.68 1.05-.85 1.65-.17.6-.22 1.230-.15 1.85v4"/><path d="M9 18c-4.51 2-5-2-7-2"/></svg>
<div class="t" style="left:2681.76px;top:107.48px;font:bold 24px/29px 'Liberation Sans', sans-serif;color:#2b3444;letter-spacing:0.411px;transform:scaleY(1.05);transform-origin:0 22.82px;">Use VScode</div>
<div class="a" style="left:0px;top:0px;width:96px;height:1556px;background:#202125"></div>
<div class="a" style="left:0px;top:94px;width:96px;height:2px;background:#343b48"></div>
<div class="a" style="left:0px;top:383px;width:96px;height:2px;background:#343b48"></div>
<svg class="a" style="left:20px;top:20px" width="56" height="56" viewBox="0 0 1392 1392"><polygon fill="#cccccc" points="720,200 940,200 820,410 600,410"/><polygon fill="#cccccc" points="200,650 450,650 560,850 300,850"/><polygon fill="#cccccc" points="955,680 1070,880 960,1065 840,870"/><polygon fill="#ffffff" points="430,245 680,645 570,845 320,425"/><polygon fill="#ffffff" points="600,420 1090,420 1195,610 700,610"/><polygon fill="#ffffff" points="700,660 950,660 720,1090 480,1090"/></svg>
<svg class="a" style="left:32.0px;top:144.0px;" width="32" height="32" viewBox="0 0 24 24" fill="none" stroke="#f3f4f6" stroke-width="2" stroke-linecap="round" stroke-linejoin="round"><rect width="16" height="20" x="4" y="2" rx="2" ry="2"/><path d="M9 22v-4h6v4"/><path d="M8 6h.01"/><path d="M16 6h.01"/><path d="M12 6h.01"/><path d="M12 10h.01"/><path d="M12 14h.01"/><path d="M16 10h.01"/><path d="M16 14h.01"/><path d="M8 10h.01"/><path d="M8 14h.01"/></svg>
<svg class="a" style="left:32.0px;top:224.0px;" width="32" height="32" viewBox="0 0 24 24" fill="none" stroke="#f3f4f6" stroke-width="2" stroke-linecap="round" stroke-linejoin="round"><polygon points="12 2 15.09 8.26 22 9.27 17 14.14 18.18 21.02 12 17.77 5.82 21.02 7 14.14 2 9.27 8.91 8.26 12 2"/></svg>
<svg class="a" style="left:32.0px;top:304.0px;" width="32" height="32" viewBox="0 0 24 24" fill="none" stroke="#f3f4f6" stroke-width="2" stroke-linecap="round" stroke-linejoin="round"><circle cx="11" cy="11" r="8"/><path d="m21 21-4.3-4.3"/></svg>
<svg class="a" style="left:32.0px;top:434.0px;" width="32" height="32" viewBox="0 0 24 24" fill="none" stroke="#f3f4f6" stroke-width="2" stroke-linecap="round" stroke-linejoin="round"><path d="m3 9 9-7 9 7v11a2 2 0 0 1-2 2H5a2 2 0 0 1-2-2z"/><polyline points="9 22 9 12 15 12 15 22"/></svg>
<svg class="a" style="left:32.0px;top:506.0px;" width="32" height="32" viewBox="0 0 24 24" fill="none" stroke="#f3f4f6" stroke-width="2" stroke-linecap="round" stroke-linejoin="round"><polygon points="6 3 20 12 6 21 6 3"/></svg>
<svg class="a" style="left:32.0px;top:578.0px;" width="32" height="32" viewBox="0 0 24 24" fill="none" stroke="#f3f4f6" stroke-width="2" stroke-linecap="round" stroke-linejoin="round"><line x1="12" x2="12" y1="2" y2="22"/><path d="M17 5H9.5a3.5 3.5 0 0 0 0 7h5a3.5 3.5 0 0 1 0 7H6"/></svg>
<svg class="a" style="left:32.0px;top:650.0px;" width="32" height="32" viewBox="0 0 24 24" fill="none" stroke="#f3f4f6" stroke-width="2" stroke-linecap="round" stroke-linejoin="round"><path d="M2.97 12.92A2 2 0 0 0 2 14.63v3.24a2 2 0 0 0 .97 1.71l3 1.8a2 2 0 0 0 2.06 0L12 19v-5.5l-5-3-4.03 2.42Z"/><path d="m7 16.5-4.74-2.85"/><path d="m7 16.5 5-3"/><path d="M7 16.5v5.17"/><path d="M12 13.5V19l3.97 2.38a2 2 0 0 0 2.06 0l3-1.8a2 2 0 0 0 .97-1.71v-3.24a2 2 0 0 0-.97-1.71L17 10.5l-5 3Z"/><path d="m17 16.5-5-3"/><path d="m17 16.5 4.74-2.85"/><path d="M17 16.5v5.17"/><path d="M7.97 4.42A2 2 0 0 0 7 6.13v4.37l5 3 5-3V6.13a2 2 0 0 0-.97-1.71l-3-1.8a2 2 0 0 0-2.06 0l-3 1.8Z"/><path d="M12 8 7.26 5.15"/><path d="m12 8 4.74-2.85"/><path d="M12 13.5V8"/></svg>
<svg class="a" style="left:32.0px;top:722.0px;" width="32" height="32" viewBox="0 0 24 24" fill="none" stroke="#f3f4f6" stroke-width="2" stroke-linecap="round" stroke-linejoin="round"><rect width="18" height="18" x="3" y="4" rx="2" ry="2"/><line x1="16" x2="16" y1="2" y2="6"/><line x1="8" x2="8" y1="2" y2="6"/><line x1="3" x2="21" y1="10" y2="10"/></svg>
<svg class="a" style="left:32.0px;top:1016.0px;" width="32" height="32" viewBox="0 0 24 24" fill="none" stroke="#f3f4f6" stroke-width="2" stroke-linecap="round" stroke-linejoin="round"><path d="M19 21v-2a4 4 0 0 0-4-4H9a4 4 0 0 0-4 4v2"/><circle cx="12" cy="7" r="4"/></svg>
<svg class="a" style="left:32.0px;top:1084.0px;" width="32" height="32" viewBox="0 0 24 24" fill="none" stroke="#f3f4f6" stroke-width="2" stroke-linecap="round" stroke-linejoin="round"><path d="M12.22 2h-.44a2 2 0 0 0-2 2v.18a2 2 0 0 1-1 1.730l-.43.25a2 2 0 0 1-2 0l-.15-.08a2 2 0 0 0-2.73.73l-.22.38a2 2 0 0 0 .73 2.73l.15.1a2 2 0 0 1 1 1.72v.51a2 2 0 0 1-1 1.74l-.15.09a2 2 0 0 0-.73 2.73l.22.38a2 2 0 0 0 2.73.73l.15-.08a2 2 0 0 1 2 0l.43.25a2 2 0 0 1 1 1.73V20a2 2 0 0 0 2 2h.44a2 2 0 0 0 2-2v-.18a2 2 0 0 1 1-1.73l.43-.25a2 2 0 0 1 2 0l.15.08a2 2 0 0 0 2.73-.73l.22-.39a2 2 0 0 0-.73-2.730l-.15-.08a2 2 0 0 1-1-1.74v-.5a2 2 0 0 1 1-1.74l.15-.09a2 2 0 0 0 .73-2.73l-.22-.38a2 2 0 0 0-2.73-.73l-.15.08a2 2 0 0 1-2 0l-.43-.25a2 2 0 0 1-1-1.73V4a2 2 0 0 0-2-2z"/><circle cx="12" cy="12" r="3"/></svg>
<svg class="a" style="left:32.0px;top:1152.0px;" width="32" height="32" viewBox="0 0 24 24" fill="none" stroke="#f3f4f6" stroke-width="2" stroke-linecap="round" stroke-linejoin="round"><path d="M12 8V4H8"/><rect width="16" height="12" x="4" y="8" rx="2"/><path d="M2 14h2"/><path d="M20 14h2"/><path d="M15 13v2"/><path d="M9 13v2"/></svg>
<svg class="a" style="left:32.0px;top:1220.0px;" width="32" height="32" viewBox="0 0 24 24" fill="none" stroke="#f3f4f6" stroke-width="2" stroke-linecap="round" stroke-linejoin="round"><path d="m6 14 1.5-2.9A2 2 0 0 1 9.24 10H20a2 2 0 0 1 1.94 2.5l-1.54 6a2 2 0 0 1-1.95 1.5H4a2 2 0 0 1-2-2V5a2 2 0 0 1 2-2h3.9a2 2 0 0 1 1.69.9l.81 1.2a2 2 0 0 0 1.67.9H18a2 2 0 0 1 2 2v2"/></svg>
<svg class="a" style="left:32.0px;top:1288.0px;" width="32" height="32" viewBox="0 0 24 24" fill="none" stroke="#f3f4f6" stroke-width="2" stroke-linecap="round" stroke-linejoin="round"><path d="M2 12s3-7 10-7 10 7 10 7-3 7-10 7-10-7-10-7Z"/><circle cx="12" cy="12" r="3"/></svg>
<svg class="a" style="left:32.0px;top:1434.0px;" width="32" height="32" viewBox="0 0 24 24" fill="none" stroke="#f3f4f6" stroke-width="2" stroke-linecap="round" stroke-linejoin="round"><circle cx="12" cy="12" r="10"/><path d="M9.09 9a3 3 0 0 1 5.83 1c0 2-3 3-3 3"/><path d="M12 17h.01"/></svg>
<svg class="a" style="left:32.0px;top:1497.0px;" width="32" height="32" viewBox="0 0 24 24" fill="none" stroke="#f3f4f6" stroke-width="2" stroke-linecap="round" stroke-linejoin="round"><path d="M5 12h14"/><path d="m12 5 7 7-7 7"/></svg></body></html>
